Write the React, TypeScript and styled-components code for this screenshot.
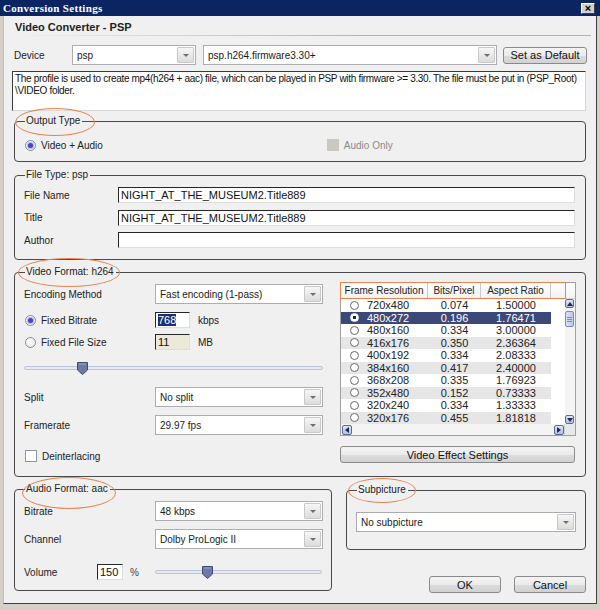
import React from "react";
import styled, { createGlobalStyle } from "styled-components";

const GlobalStyle = createGlobalStyle`
  html, body {
    margin: 0;
    padding: 0;
    background: #d4d0c8;
  }
  body {
    font-family: "Liberation Sans", Arial, sans-serif;
    font-size: 10px;
    color: #1a1a1a;
  }
`;

const resolutions = [
  { res: "720x480", bits: "0.074", ratio: "1.50000" },
  { res: "480x272", bits: "0.196", ratio: "1.76471", selected: true },
  { res: "480x160", bits: "0.334", ratio: "3.00000" },
  { res: "416x176", bits: "0.350", ratio: "2.36364" },
  { res: "400x192", bits: "0.334", ratio: "2.08333" },
  { res: "384x160", bits: "0.417", ratio: "2.40000" },
  { res: "368x208", bits: "0.335", ratio: "1.76923" },
  { res: "352x480", bits: "0.152", ratio: "0.73333" },
  { res: "320x240", bits: "0.334", ratio: "1.33333" },
  { res: "320x176", bits: "0.455", ratio: "1.81818" },
];

const Dropdown = ({ value, width }: { value: string; width: number }) => (
  <SelectBox $w={width}>
    <SelectText>{value}</SelectText>
    <SelectButton>
      <Arrow />
    </SelectButton>
  </SelectBox>
);

const Slider = ({ pos, width }: { pos: number; width: number }) => (
  <SliderWrap $w={width}>
    <Track />
    <Thumb style={{ left: pos }} width="11" height="13" viewBox="0 0 11 13">
      <path d="M0.5 0.5 H10.5 V8 L5.5 12.5 L0.5 8 Z" fill="#6d7aa6" stroke="#3e4a74" />
      <path d="M2 2 H9" stroke="#9aa5c8" />
    </Thumb>
  </SliderWrap>
);

const App = () => {
  return (
    <>
      <GlobalStyle />
      <Window>
        <TitleBar>
          <TitleText>Conversion Settings</TitleText>
          <CloseButton>×</CloseButton>
        </TitleBar>
        <Client>
          <Heading>Video Converter - PSP</Heading>
          <DeviceRow>
            <RowLabel $w={58}>Device</RowLabel>
            <Dropdown value="psp" width={124} />
            <Dropdown value="psp.h264.firmware3.30+" width={294} />
            <PushButton $w={84}>Set as Default</PushButton>
          </DeviceRow>
          <Description>
            The profile is used to create mp4(h264 + aac) file, which can be played in PSP with firmware &gt;= 3.30. The file must be put in (PSP_Root)
            <br />
            \VIDEO folder.
          </Description>

          <Group $h={47} $mt={4}>
            <Legend>Output Type</Legend>
            <OutputRow>
              <Option>
                <Radio $on />
                Video + Audio
              </Option>
              <Option $disabled>
                <CheckBox $disabled />
                Audio Only
              </Option>
            </OutputRow>
          </Group>

          <Group $h={91} $mt={7}>
            <Legend>File Type: psp</Legend>
            <FileRows>
              <FieldRow>
                <RowLabel $w={94}>File Name</RowLabel>
                <TextField $w={457}>NIGHT_AT_THE_MUSEUM2.Title889</TextField>
              </FieldRow>
              <FieldRow>
                <RowLabel $w={94}>Title</RowLabel>
                <TextField $w={457}>NIGHT_AT_THE_MUSEUM2.Title889</TextField>
              </FieldRow>
              <FieldRow>
                <RowLabel $w={94}>Author</RowLabel>
                <TextField $w={457} />
              </FieldRow>
            </FileRows>
          </Group>

          <Group $h={211} $mt={6}>
            <Legend>Video Format: h264</Legend>
            <VideoColumns>
              <LeftColumn>
                <FormRow $h={20}>
                  <RowLabel $w={131}>Encoding Method</RowLabel>
                  <Dropdown value="Fast encoding (1-pass)" width={168} />
                </FormRow>
                <FormRow $h={16} $mt={8}>
                  <RowLabel $w={131}>
                    <Option>
                      <Radio $on />
                      Fixed Bitrate
                    </Option>
                  </RowLabel>
                  <TextField $w={35}>
                    <Selected>768</Selected>
                  </TextField>
                  <Unit>kbps</Unit>
                </FormRow>
                <FormRow $h={16} $mt={6}>
                  <RowLabel $w={131}>
                    <Option>
                      <Radio />
                      Fixed File Size
                    </Option>
                  </RowLabel>
                  <TextField $w={35} $bg="#ece9d8">11</TextField>
                  <Unit>MB</Unit>
                </FormRow>
                <FormRow $h={14} $mt={11}>
                  <Slider pos={53} width={299} />
                </FormRow>
                <FormRow $h={20} $mt={12}>
                  <RowLabel $w={131}>Split</RowLabel>
                  <Dropdown value="No split" width={168} />
                </FormRow>
                <FormRow $h={20} $mt={8}>
                  <RowLabel $w={131}>Framerate</RowLabel>
                  <Dropdown value="29.97 fps" width={168} />
                </FormRow>
                <FormRow $h={14} $mt={14}>
                  <Option>
                    <CheckBox />
                    Deinterlacing
                  </Option>
                </FormRow>
              </LeftColumn>

              <RightColumn>
                <ListBox>
                  <ListMain>
                    <HeaderRow>
                      <HeaderCell $w={87}>Frame Resolution</HeaderCell>
                      <HeaderCell $w={53}>Bits/Pixel</HeaderCell>
                      <HeaderCell $w={70}>Aspect Ratio</HeaderCell>
                      <HeaderCell $w={24} $last />
                    </HeaderRow>
                    <RowsArea>
                      <Rows>
                        {resolutions.map((r, i) => (
                          <DataRow key={r.res + i} $sel={!!r.selected} $alt={i % 2 === 1}>
                            <ResCell>
                              <SmallRadio $on={!!r.selected} />
                              {r.res}
                            </ResCell>
                            <NumCell $w={53}>{r.bits}</NumCell>
                            <NumCell $w={70}>{r.ratio}</NumCell>
                          </DataRow>
                        ))}
                      </Rows>
                      <VScroll>
                        <ScrollBtn>
                          <svg width="6" height="4" viewBox="0 0 6 4">
                            <path d="M0 4 L3 0 L6 4 Z" fill="#1e2a5a" />
                          </svg>
                        </ScrollBtn>
                        <ScrollThumb>
                          <Grip />
                          <Grip />
                          <Grip />
                        </ScrollThumb>
                        <ScrollSpace />
                        <ScrollBtn>
                          <svg width="6" height="4" viewBox="0 0 6 4">
                            <path d="M0 0 L3 4 L6 0 Z" fill="#1e2a5a" />
                          </svg>
                        </ScrollBtn>
                      </VScroll>
                    </RowsArea>
                    <HScroll>
                      <ScrollBtn $h>
                        <svg width="4" height="6" viewBox="0 0 4 6">
                          <path d="M4 0 L0 3 L4 6 Z" fill="#1e2a5a" />
                        </svg>
                      </ScrollBtn>
                      <ScrollSpace />
                      <ScrollBtn $h>
                        <svg width="4" height="6" viewBox="0 0 4 6">
                          <path d="M0 0 L4 3 L0 6 Z" fill="#1e2a5a" />
                        </svg>
                      </ScrollBtn>
                      <Corner />
                    </HScroll>
                  </ListMain>
                </ListBox>
                <PushButton $w={235} $mt={10}>Video Effect Settings</PushButton>
              </RightColumn>
            </VideoColumns>
          </Group>

          <BottomRow>
            <Group $h={108} $w={318}>
              <Legend>Audio Format: aac</Legend>
              <FormRow $h={20} $mt={6}>
                <RowLabel $w={131}>Bitrate</RowLabel>
                <Dropdown value="48 kbps" width={168} />
              </FormRow>
              <FormRow $h={20} $mt={8}>
                <RowLabel $w={131}>Channel</RowLabel>
                <Dropdown value="Dolby ProLogic II" width={168} />
              </FormRow>
              <FormRow $h={16} $mt={15}>
                <RowLabel $w={73}>Volume</RowLabel>
                <TextField $w={26}>150</TextField>
                <Percent>%</Percent>
                <Slider pos={47} width={168} />
              </FormRow>
            </Group>
            <SideColumn>
              <Group $h={66} $mt={1}>
                <Legend>Subpicture</Legend>
                <FormRow $h={20} $mt={16}>
                  <Dropdown value="No subpicture" width={220} />
                </FormRow>
              </Group>
              <DialogButtons>
                <PushButton $w={72}>OK</PushButton>
                <PushButton $w={72}>Cancel</PushButton>
              </DialogButtons>
            </SideColumn>
          </BottomRow>
        </Client>

        <Ellipse $x={15} $y={108} $w={80} $h={28} />
        <Ellipse $x={18} $y={258} $w={102} $h={29} />
        <Ellipse $x={22} $y={477} $w={94} $h={32} />
        <Ellipse $x={348} $y={478} $w={68} $h={25} />
        <Marker $x={340} $y={282} $w={226} $h={17} />
      </Window>
    </>
  );
};

export default App;

const Window = styled.div`
  position: relative;
  width: 600px;
  height: 610px;
  box-sizing: border-box;
  background: #d4d0c8;
  padding: 0 3px 6px 3px;
  display: flex;
  flex-direction: column;
  overflow: hidden;
`;

const TitleBar = styled.div`
  height: 16px;
  margin: 0 -3px;
  padding: 0 4px 0 3px;
  background: #0b2462;
  display: flex;
  align-items: center;
  justify-content: space-between;
`;

const TitleText = styled.span`
  color: #fff;
  font-family: "Liberation Serif", "Times New Roman", serif;
  font-weight: bold;
  font-size: 11px;
  letter-spacing: 0.3px;
`;

const CloseButton = styled.span`
  width: 12px;
  height: 9px;
  margin-right: 1px;
  background: #d4d0c8;
  color: #000;
  font-size: 11px;
  font-weight: bold;
  line-height: 9px;
  text-align: center;
  border-top: 1px solid #fff;
  border-left: 1px solid #fff;
  border-right: 1px solid #404040;
  border-bottom: 1px solid #404040;
`;

const Client = styled.div`
  flex: 1;
  background: #f0f0f0;
  border-right: 1px solid #404040;
  border-bottom: 1px solid #404040;
  border-left: 1px solid #c0c0c0;
  padding: 0 10px 0 10px;
  display: flex;
  flex-direction: column;
`;

const Heading = styled.div`
  height: 20px;
  padding: 5px 0 0 1px;
  box-sizing: border-box;
  margin-right: -5px;
  font-size: 11px;
  font-weight: bold;
  color: #222;
  border-bottom: 1px solid transparent;
  border-image: linear-gradient(to right, rgba(160, 175, 200, 0), #a8b4c8 60%, #a8b4c8) 1;
`;

const DeviceRow = styled.div`
  margin-top: 9px;
  height: 20px;
  display: flex;
  align-items: center;
  gap: 7px;
  & > :last-child {
    margin-left: -1px;
  }
`;

const RowLabel = styled.div<{ $w: number }>`
  width: ${(p) => p.$w}px;
  flex: none;
  margin-right: ${(p) => (p.$w === 58 ? -7 : 0)}px;
  color: #222;
`;

const SelectBox = styled.div<{ $w: number }>`
  width: ${(p) => p.$w}px;
  height: 20px;
  box-sizing: border-box;
  flex: none;
  display: flex;
  align-items: stretch;
  background: #fff;
  border: 1px solid #abadb3;
`;

const SelectText = styled.span`
  flex: 1;
  padding-left: 4px;
  display: flex;
  align-items: center;
  white-space: nowrap;
  overflow: hidden;
`;

const SelectButton = styled.span`
  width: 15px;
  margin: 1px;
  border: 1px solid #c8c8c8;
  border-radius: 1px;
  background: linear-gradient(#f6f6f6, #dcdcdc);
  display: flex;
  align-items: center;
  justify-content: center;
`;

const Arrow = styled.span`
  width: 0;
  height: 0;
  border-left: 3px solid transparent;
  border-right: 3px solid transparent;
  border-top: 3px solid #6f6f6f;
`;

const PushButton = styled.div<{ $w: number; $mt?: number }>`
  width: ${(p) => p.$w}px;
  height: 17px;
  margin-top: ${(p) => p.$mt ?? 0}px;
  box-sizing: border-box;
  flex: none;
  border: 1px solid #8a8a8a;
  border-radius: 3px;
  background: linear-gradient(#f4f4f4 0%, #ebebeb 50%, #dcdcdc 51%, #d2d2d2 100%);
  display: flex;
  align-items: center;
  justify-content: center;
  font-size: 11px;
  color: #111;
`;

const Description = styled.div`
  margin: 6px 0 0 -2px;
  height: 40px;
  box-sizing: border-box;
  padding: 1px 1px 1px 2px;
  background: #fff;
  border-top: 1px solid #3a3a3a;
  border-left: 1px solid #3a3a3a;
  border-right: 1px solid #d8d8d8;
  border-bottom: 1px solid #d8d8d8;
  line-height: 12px;
  font-size: 10px;
  letter-spacing: -0.32px;
  white-space: nowrap;
  overflow: hidden;
  color: #111;
`;

const Group = styled.fieldset<{ $h: number; $mt?: number; $w?: number }>`
  margin: ${(p) => p.$mt ?? 0}px 0 0 0;
  height: ${(p) => p.$h}px;
  width: ${(p) => (p.$w ? `${p.$w}px` : "auto")};
  box-sizing: border-box;
  min-width: 0;
  padding: 0 9px;
  border: 1px solid #4a4a4a;
  border-radius: 4px;
`;

const Legend = styled.legend`
  padding: 0 2px 0 1px;
  margin-left: 1px;
  height: 12px;
  line-height: 12px;
  font-size: 10px;
  color: #222;
`;

const OutputRow = styled.div`
  margin-top: 11px;
  height: 14px;
  display: flex;
  align-items: center;
  & > :last-child {
    margin-left: 223px;
  }
`;

const Option = styled.div<{ $disabled?: boolean }>`
  display: flex;
  align-items: center;
  gap: 5px;
  color: ${(p) => (p.$disabled ? "#8a8a8a" : "#222")};
  white-space: nowrap;
`;

const Radio = styled.span<{ $on?: boolean }>`
  position: relative;
  width: 11px;
  height: 11px;
  box-sizing: border-box;
  flex: none;
  border-radius: 50%;
  border: 1px solid #8090a8;
  background: radial-gradient(circle at 40% 40%, #fff, #e2e2e2);
  margin-left: 1px;
  &::after {
    content: "";
    display: ${(p) => (p.$on ? "block" : "none")};
    position: absolute;
    left: 2px;
    top: 2px;
    width: 5px;
    height: 5px;
    border-radius: 50%;
    background: #4c44c6;
    box-shadow: 0 0 0 1px #b9b5ec;
  }
`;

const CheckBox = styled.span<{ $disabled?: boolean }>`
  width: 12px;
  height: 12px;
  box-sizing: border-box;
  flex: none;
  border: 1px solid ${(p) => (p.$disabled ? "#cbc8c1" : "#8d96a4")};
  background: ${(p) => (p.$disabled ? "#cbc8c1" : "#fff")};
  margin-left: 1px;
`;

const FileRows = styled.div`
  margin-top: 6px;
  display: flex;
  flex-direction: column;
  gap: 6.5px;
`;

const FieldRow = styled.div`
  display: flex;
  align-items: center;
  height: 16px;
`;

const TextField = styled.div<{ $w: number; $bg?: string }>`
  width: ${(p) => p.$w}px;
  height: 16px;
  box-sizing: border-box;
  flex: none;
  padding: 0 2px;
  display: flex;
  align-items: center;
  background: ${(p) => p.$bg ?? "#fff"};
  border-top: 1px solid #262626;
  border-left: 1px solid #262626;
  border-right: 1px solid #dedede;
  border-bottom: 1px solid #dedede;
  font-size: 11px;
  color: #111;
  white-space: nowrap;
`;

const Selected = styled.span`
  background: #1d2f6e;
  color: #fff;
  line-height: 12px;
`;

const Unit = styled.span`
  margin-left: 8px;
`;

const Percent = styled.span`
  width: 32px;
  padding-left: 7px;
  box-sizing: border-box;
  color: #444;
`;

const VideoColumns = styled.div`
  display: flex;
  gap: 17px;
`;

const LeftColumn = styled.div`
  width: 299px;
  margin-top: 6px;
  display: flex;
  flex-direction: column;
`;

const RightColumn = styled.div`
  width: 237px;
  margin-top: 4px;
  display: flex;
  flex-direction: column;
`;

const FormRow = styled.div<{ $h: number; $mt?: number }>`
  height: ${(p) => p.$h}px;
  margin-top: ${(p) => p.$mt ?? 0}px;
  display: flex;
  align-items: center;
`;

const SliderWrap = styled.div<{ $w: number }>`
  position: relative;
  width: ${(p) => p.$w}px;
  height: 14px;
  display: flex;
  align-items: center;
`;

const Track = styled.div`
  width: 100%;
  height: 4px;
  box-sizing: border-box;
  border: 1px solid #bcc5d8;
  border-radius: 2px;
  background: #e6e9f2;
`;

const Thumb = styled.svg`
  position: absolute;
  top: 1px;
`;

const ListBox = styled.div`
  width: 236px;
  height: 154px;
  box-sizing: border-box;
  border: 1px solid #a0a0a0;
  background: #fff;
`;

const ListMain = styled.div`
  display: flex;
  flex-direction: column;
  height: 100%;
`;

const HeaderRow = styled.div`
  height: 15px;
  display: flex;
  background: linear-gradient(#ffffff, #f2f2f2);
  border-bottom: 1px solid #d6d6d6;
`;

const HeaderCell = styled.div<{ $w: number; $last?: boolean }>`
  width: ${(p) => p.$w}px;
  box-sizing: border-box;
  flex: none;
  border-right: ${(p) => (p.$last ? "none" : "1px solid #c9c9c9")};
  display: flex;
  align-items: center;
  justify-content: center;
  color: #222;
  white-space: nowrap;
`;

const RowsArea = styled.div`
  flex: 1;
  display: flex;
`;

const Rows = styled.div`
  width: 224px;
  display: flex;
  flex-direction: column;
`;

const DataRow = styled.div<{ $sel: boolean; $alt: boolean }>`
  height: 12.5px;
  width: 210px;
  display: flex;
  align-items: center;
  background: ${(p) => (p.$sel ? "#3c4877" : p.$alt ? "#e6e6e6" : "#fff")};
  color: ${(p) => (p.$sel ? "#fff" : "#222")};
  font-size: 11px;
`;

const ResCell = styled.div`
  width: 87px;
  box-sizing: border-box;
  padding-left: 9px;
  display: flex;
  align-items: center;
  gap: 8px;
`;

const SmallRadio = styled.span<{ $on: boolean }>`
  width: 9px;
  height: 9px;
  box-sizing: border-box;
  border-radius: 50%;
  border: 1px solid ${(p) => (p.$on ? "#fff" : "#6a6a6a")};
  background: ${(p) => (p.$on ? "radial-gradient(circle, #1c2450 0 1.5px, #fff 2px)" : "#fff")};
`;

const NumCell = styled.div<{ $w: number }>`
  width: ${(p) => p.$w}px;
  text-align: center;
`;

const VScroll = styled.div`
  width: 10px;
  margin-left: 1px;
  display: flex;
  flex-direction: column;
  background: #f4f4f4;
`;

const ScrollBtn = styled.div<{ $h?: boolean }>`
  width: ${(p) => (p.$h ? 10 : 9)}px;
  height: ${(p) => (p.$h ? 10 : 9)}px;
  flex: none;
  box-sizing: border-box;
  border: 1px solid #5b6c9c;
  border-radius: 2px;
  background: linear-gradient(#dfe6f6, #b3c0e0);
  display: flex;
  align-items: center;
  justify-content: center;
`;

const ScrollThumb = styled.div`
  width: 9px;
  height: 16px;
  margin-top: 3px;
  box-sizing: border-box;
  border: 1px solid #7b8cba;
  border-radius: 2px;
  background: linear-gradient(to right, #dbe2f4, #bcc8e6);
  display: flex;
  flex-direction: column;
  justify-content: center;
  align-items: center;
  gap: 1px;
`;

const Grip = styled.span`
  width: 5px;
  height: 1px;
  background: #7b8cba;
`;

const ScrollSpace = styled.div`
  flex: 1;
`;

const HScroll = styled.div`
  height: 11px;
  display: flex;
  align-items: center;
  background: #f4f4f4;
  padding-left: 1px;
`;

const Corner = styled.div`
  width: 11px;
  height: 11px;
  background: #e8e8e8;
  border-left: 1px solid #d0d0d0;
  box-sizing: border-box;
`;

const BottomRow = styled.div`
  margin-top: 6px;
  display: flex;
  gap: 14px;
  align-items: flex-start;
`;

const SideColumn = styled.div`
  flex: 1;
  display: flex;
  flex-direction: column;
`;

const DialogButtons = styled.div`
  margin-top: 26px;
  display: flex;
  justify-content: flex-end;
  gap: 13px;
`;

const Ellipse = styled.div<{ $x: number; $y: number; $w: number; $h: number }>`
  position: absolute;
  left: ${(p) => p.$x}px;
  top: ${(p) => p.$y}px;
  width: ${(p) => p.$w}px;
  height: ${(p) => p.$h}px;
  box-sizing: border-box;
  border: 1px solid #e8834e;
  border-radius: 50%;
  pointer-events: none;
`;

const Marker = styled.div<{ $x: number; $y: number; $w: number; $h: number }>`
  position: absolute;
  left: ${(p) => p.$x}px;
  top: ${(p) => p.$y}px;
  width: ${(p) => p.$w}px;
  height: ${(p) => p.$h}px;
  box-sizing: border-box;
  border: 1px solid #e8834e;
  pointer-events: none;
`;
